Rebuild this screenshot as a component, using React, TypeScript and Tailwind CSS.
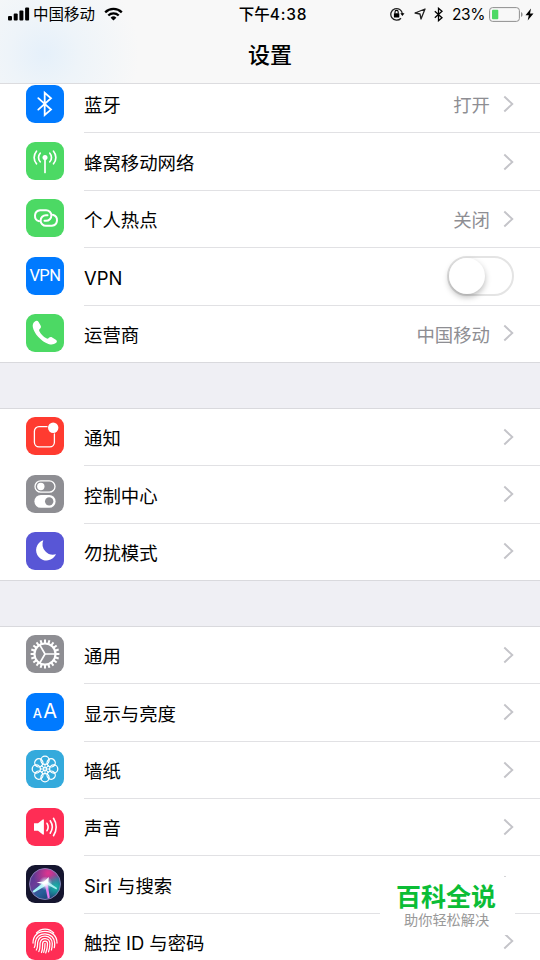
import type { ReactNode } from 'react';
import clsx from 'clsx';

interface Item {
  label: string;
  value?: string;
  toggle?: boolean;
  bg: string;
  icon: ReactNode;
}

const line = { fill: 'none', stroke: '#fff', strokeLinecap: 'round', strokeLinejoin: 'round' } as const;
const teeth = Array.from({ length: 20 }, (_, i) => i * 18);
const petals = Array.from({ length: 8 }, (_, i) => i * 45);

const network: Item[] = [
  {
    label: '蓝牙', value: '打开', bg: 'bg-[#007aff]',
    icon: <path d="M12.3 13.2 25 24.6 18.7 30V7.8L25 13.2 12.3 24.6" {...line} strokeWidth="1.8" strokeLinejoin="miter" />,
  },
  {
    label: '蜂窝移动网络', bg: 'bg-[#4cd964]',
    icon: (
      <g {...line} strokeWidth="1.7">
        <circle cx="19" cy="15.5" r="2.5" fill="#fff" stroke="none" />
        <path d="M19 16v14.5" />
        <path d="M14.2 11.2a6.4 6.4 0 0 0 0 8.6M23.8 11.2a6.4 6.4 0 0 1 0 8.6" />
        <path d="M10.5 9.2a9.6 9.6 0 0 0 0 12.6M27.5 9.2a9.6 9.6 0 0 1 0 12.6" />
      </g>
    ),
  },
  {
    label: '个人热点', value: '关闭', bg: 'bg-[#4cd964]',
    icon: (
      <g {...line} strokeWidth="2">
        <path d="M13.2 22.2a5.6 5.6 0 0 1 .9-11h6a5.3 5.3 0 0 1 0 10.6h-1.6" />
        <path d="M13.2 22.2a5.6 5.6 0 0 1 .9-11h6a5.3 5.3 0 0 1 0 10.6h-1.6" transform="rotate(180 20 19)" />
      </g>
    ),
  },
  {
    label: 'VPN', toggle: true, bg: 'bg-[#007aff]',
    icon: <text x="19.2" y="24.2" textAnchor="middle" fill="#fff" fontSize="16.5" textLength="31.5" fontFamily="Roboto, sans-serif">VPN</text>,
  },
  {
    label: '运营商', value: '中国移动', bg: 'bg-[#4cd964]',
    icon: <path fill="#fff" d="M8.600 7.700c1.600-1.300 3.100-1.100 4 .3l2 3.400c.7 1.300.4 2.400-.6 3.300-1 .8-1.100 1.500-.5 2.700 1.400 2.700 3.900 5.300 6.800 6.900 1.100.6 1.800.5 2.600-.5.9-1 2.100-1.200 3.300-.4l3.600 2.300c1.400.9 1.500 2.300.1 3.400-1.800 1.500-4.500 1.800-7.500.9-3.600-1.200-7.300-4-10.300-7.300-2.800-3.200-4.500-6.300-5.200-9.300-.5-2.400 0-4.400 1.700-5.700z" />,
  },
];

const alerts: Item[] = [
  {
    label: '通知', bg: 'bg-[#ff3b30]',
    icon: (
      <>
        <path d="M21 9.7h-8a4.600 4.600 0 0 0-4.600 4.600v11A4.600 4.600 0 0 0 13 29.900h10.800a4.600 4.600 0 0 0 4.600-4.600V17" {...line} strokeWidth="1.3" />
        <circle cx="27.2" cy="10.7" r="5.2" fill="#fff" />
      </>
    ),
  },
  {
    label: '控制中心', bg: 'bg-[#8e8e93]',
    icon: (
      <>
        <rect x="9" y="5.8" width="20" height="11.4" rx="5.7" {...line} strokeWidth="1.3" />
        <circle cx="14.8" cy="11.5" r="3.7" fill="#fff" />
        <rect x="8.4" y="20" width="21.2" height="12.8" rx="6.4" fill="#fff" />
        <circle cx="23.2" cy="26.4" r="4.2" fill="#8e8e93" />
      </>
    ),
  },
  {
    label: '勿扰模式', bg: 'bg-[#5856d6]',
    icon: <path fill="#fff" d="M17.3 8.2A10.4 10.4 0 1 0 30 22.3 10.6 10.6 0 0 1 17.3 8.2z" />,
  },
];

const system: Item[] = [
  {
    label: '通用', bg: 'bg-[#8e8e93]',
    icon: (
      <g {...line} strokeLinecap="butt">
        <circle cx="19" cy="19" r="10.5" strokeWidth="2.1" />
        {teeth.map((a) => (
          <path key={a} d="M19 8.5V4.6" strokeWidth="2" transform={`rotate(${a} 19 19)`} />
        ))}
        <path d="M19 19h10.500M19 19l-5.300-9.200M19 19l-5.300 9.200" strokeWidth="1.7" />
      </g>
    ),
  },
  {
    label: '显示与亮度', bg: 'bg-[#007aff]',
    icon: (
      <g fill="#fff" fontFamily="Inter, sans-serif">
        <text x="6.8" y="25.3" fontSize="13" fontWeight="500">A</text>
        <text x="17.2" y="25.3" fontSize="20">A</text>
      </g>
    ),
  },
  {
    label: '墙纸', bg: 'bg-[#34aadc]',
    icon: (
      <g {...line} strokeWidth="1.3">
        {petals.map((a) => (
          <circle key={a} cx="19" cy="10.3" r="4.1" transform={`rotate(${a} 19 19)`} />
        ))}
        {petals.map((a) => (
          <path key={a} d="M19 17.5v-3" strokeWidth="1" transform={`rotate(${a} 19 19)`} />
        ))}
        <circle cx="19" cy="19" r="1.5" strokeWidth="1" />
      </g>
    ),
  },
  {
    label: '声音', bg: 'bg-[#ff2d55]',
    icon: (
      <>
        <path fill="#fff" d="M8 15.200h4l4.800-3.700a.7.7 0 0 1 1.100.6v13.800a.7.7 0 0 1-1.100.6L12 22.800H8z" />
        <g {...line} strokeWidth="1.6">
          <path d="M21 15.300a7 7 0 0 1 0 7.400M24.200 12.800a11 11 0 0 1 0 12.400M27.500 10.300a15.500 15.500 0 0 1 0 17.400" />
        </g>
      </>
    ),
  },
  {
    label: 'Siri 与搜索', bg: 'bg-[#15152f]',
    icon: (
      <>
        <defs>
          <linearGradient id="siri" x1="0" y1="0" x2=".8" y2="1">
            <stop offset="0" stopColor="#43358f" />
            <stop offset=".4" stopColor="#6c3c98" />
            <stop offset=".65" stopColor="#27609b" />
            <stop offset="1" stopColor="#19366b" />
          </linearGradient>
          <radialGradient id="pink" cx=".6" cy=".15" r=".5">
            <stop offset="0" stopColor="#e0348f" />
            <stop offset="1" stopColor="#e0348f" stopOpacity="0" />
          </radialGradient>
          <radialGradient id="teal" cx=".85" cy=".6" r=".4">
            <stop offset="0" stopColor="#18b9a8" />
            <stop offset="1" stopColor="#18b9a8" stopOpacity="0" />
          </radialGradient>
          <radialGradient id="glow">
            <stop offset="0" stopColor="#fff" />
            <stop offset=".3" stopColor="#fff" stopOpacity=".75" />
            <stop offset="1" stopColor="#b8e8ff" stopOpacity="0" />
          </radialGradient>
        </defs>
        <circle cx="19" cy="19" r="15.5" fill="url(#siri)" />
        <circle cx="19" cy="19" r="15.5" fill="url(#pink)" />
        <circle cx="19" cy="19" r="15.5" fill="url(#teal)" />
        <circle cx="19" cy="19" r="15.5" fill="none" stroke="#8f86bb" strokeWidth=".9" />
        <path fill="#a8f6f7" d="M18.500 16.500 6.500 26.300l1.300 1.400L21 20z" />
        <path fill="#e57cf0" d="m18.500 18 3.300 15.500 2-1L21.500 18z" />
        <path fill="#a8f0ef" d="m19 18.500 11.500 6 .5-1.500-10-7z" />
        <path fill="#fff" d="M10.500 17.300 18 16.500l4.800-4.500-.5 5.500-4 2z" />
        <circle cx="19.500" cy="18.300" r="7" fill="url(#glow)" />
      </>
    ),
  },
  {
    label: '触控 ID 与密码', bg: 'bg-[#ff2d55]',
    icon: (
      <g {...line} strokeWidth="1.25">
        <path d="M10.500 11C12.500 8.500 15.500 7 19 7c3.600 0 6.700 1.500 8.700 4" />
        <path d="M7 21c0-7.400 5-11.600 12-11.600S31 14 31 21" />
        <path d="M8.300 25.500c1.300-2 .7-3.500 1-5.600.6-5 4.600-8.100 9.700-8.100 5.500 0 9.700 4 9.700 9.500 0 1.600-.1 3-.4 4.400" />
        <path d="M10.300 28c1.800-3 1-5 1.400-7.600.6-3.700 3.500-6.200 7.300-6.200 4.300 0 7.300 3.100 7.300 7.300 0 2.500-.3 4.600-.9 6.500" />
        <path d="M12.800 29.500c1.700-3.400 1-5.800 1.300-8.500.4-2.600 2.300-4.400 4.900-4.400 2.900 0 4.900 2.100 4.900 5 0 3.200-.5 5.800-1.400 8.200" />
        <path d="M15.500 30.500c1.500-3.500.9-6.200 1.100-8.900.1-1.600 1-2.600 2.400-2.600 1.500 0 2.500 1.100 2.500 2.700 0 3.500-.7 6.500-1.800 9.200" />
        <path d="M19 21.500c.1 3.600-.4 6-1.300 8.900" />
      </g>
    ),
  },
];

function Chevron() {
  return (
    <svg className="ml-[13px] mr-[26px] h-[18px] w-[11px] shrink-0" viewBox="0 0 11 18">
      <path d="M1.300 1.500 9.300 9l-8 7.500" fill="none" stroke="#c4c4c9" strokeWidth="1.9" />
    </svg>
  );
}

function Row({ item, last }: { item: Item; last: boolean }) {
  return (
    <div className={clsx('flex items-center pl-[26px]', last ? 'h-[56.6px]' : 'h-[57.4px]')}>
      <svg className={clsx('mb-0.5 size-[38px] shrink-0 rounded-[9px]', item.bg)} viewBox="0 0 38 38">{item.icon}</svg>
      <div className={clsx('ml-5 flex h-full flex-1 items-center border-b', last ? 'border-transparent' : 'border-[#e1e1e4]')}>
        <span className="flex-1 pt-1 text-[18.4px] text-black">{item.label}</span>
        {item.value && <span className="pt-1 text-[18.4px] text-[#8e8e93]">{item.value}</span>}
        {item.toggle ? (
          <div className="mr-[26px] h-10 w-[67px] rounded-full border-2 border-[#e4e4e4]">
            <div className="size-9 rounded-full bg-white shadow-[0_3px_6px_rgba(0,0,0,0.28)]" />
          </div>
        ) : (
          <Chevron />
        )}
      </div>
    </div>
  );
}

function Group({ items }: { items: Item[] }) {
  return (
    <section className="border-y border-[#d9d9dd] bg-white">
      {items.map((item, i) => (
        <Row key={item.label} item={item} last={i === items.length - 1} />
      ))}
    </section>
  );
}

function StatusBar() {
  return (
    <div className="grid h-7 grid-cols-[1fr_auto_1fr] items-center text-[15.5px] text-black">
      <div className="flex items-center pl-2">
        <svg className="h-[14px] w-[22px]" viewBox="0 0 22 14">
          <rect x="0" y="9" width="4" height="4.5" rx="1" />
          <rect x="5.7" y="6.5" width="4" height="7" rx="1" />
          <rect x="11.4" y="3.5" width="4" height="10" rx="1" />
          <rect x="17.1" y=".5" width="4" height="13" rx="1" />
        </svg>
        <span className="ml-[3px] pt-px">中国移动</span>
        <svg className="ml-[9px] h-[14px] w-[19px]" viewBox="0 0 19 14">
          <g fill="none" stroke="#000" strokeWidth="2.3">
            <path d="M1.200 5.300a12 12 0 0 1 16.600 0M4.300 8.500a7.500 7.500 0 0 1 10.400 0" />
          </g>
          <path d="M9.500 13.500 6.600 10.700a4.100 4.100 0 0 1 5.800 0z" />
        </svg>
      </div>
      <div className="pt-px pl-1.5 font-medium">下午<span className="tracking-[0.8px]">4:38</span></div>
      <div className="flex items-center justify-end pr-1.5">
        <svg className="h-[14px] w-[15px]" viewBox="0 0 15 14">
          <path d="M11 11.200A5.800 5.800 0 1 1 12.400 7" fill="none" stroke="#222" strokeWidth="1.3" />
          <path d="M10.300 6.200h4.200l-2.100 2.900z" />
          <rect x="3.9" y="6.2" width="5.4" height="4.2" rx=".5" />
          <path d="M5 6.500V5a1.600 1.600 0 0 1 3.200 0v1.500" fill="none" stroke="#000" strokeWidth="1.1" />
        </svg>
        <svg className="ml-[9px] h-3 w-3" viewBox="0 0 12 12">
          <path d="M11 1 7 11 6 6 1 5z" fill="none" stroke="#222" strokeWidth="1.3" strokeLinejoin="round" />
        </svg>
        <svg className="ml-2 h-[15px] w-[9px]" viewBox="0 0 9 15">
          <path d="m.8 4.200 7.200 6.500-3.500 3V1.300l3.500 3L.8 10.800" fill="none" stroke="#000" strokeWidth="1.3" />
        </svg>
        <span className="ml-[9px] pt-px tracking-[-0.4px]">23%</span>
        <svg className="ml-1 h-[15px] w-[34px]" viewBox="0 0 34 15">
          <rect x=".6" y=".6" width="29.8" height="13.8" rx="3" fill="none" stroke="#8f8f8f" />
          <rect x="3" y="2.7" width="6.3" height="9.6" rx="1" fill="#4cd964" />
          <path d="M32 5v5c1-.4 1.600-1.300 1.600-2.500S33 5.400 32 5z" fill="#8f8f8f" />
        </svg>
        <svg className="ml-0.5 h-[13px] w-[9px]" viewBox="0 0 9 13">
          <path d="M6 .5.5 7.200h3.300L2.700 12.500l5.800-7H5z" />
        </svg>
      </div>
    </div>
  );
}

export default function App() {
  return (
    <div className="relative h-[960px] w-[540px] overflow-hidden bg-[#efeff4] font-['Inter','Noto_Sans_CJK_SC',sans-serif]">
      <header className="relative z-10 h-[84px] border-b border-[#dcdcdf] bg-[#f8f8f8] bg-[radial-gradient(circle_at_44px_54px,#e5f0fa_0px,#eef4f9_35px,#f8f8f8_95px)]">
        <StatusBar />
        <h1 className="pt-[9px] text-center text-[22px] leading-9 font-medium text-black">设置</h1>
      </header>
      <main className="-mt-[9px] flex flex-col gap-[44.6px]">
        <Group items={network} />
        <Group items={alerts} />
        <Group items={system} />
      </main>
      <div className="absolute top-[877px] left-[380px] h-[58px] w-[135px] bg-white pt-1 pl-4">
        <p className="text-[25px] leading-[32px] font-bold text-[#0bbd36]">百科全说</p>
        <p className="pl-2 text-[14.2px] leading-[14px] text-[#999]">助你轻松解决</p>
      </div>
    </div>
  );
}
